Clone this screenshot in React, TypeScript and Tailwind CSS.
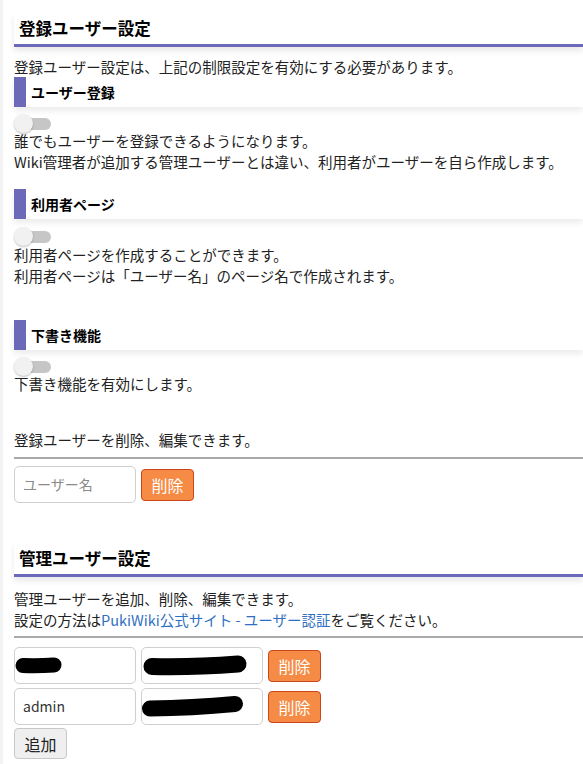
import React from "react";

const font = { fontFamily: '"Noto Sans CJK JP", "Noto Sans", sans-serif' };

const SectionTitle = ({ children }: { children: React.ReactNode }) => (
  <h2 className="h-[34px] flex items-center pl-[5px] border-b-[3px] border-[#6b69b8] bg-white text-[16.5px] font-bold text-black shadow-[0_4px_6px_rgba(0,0,0,0.09)]">
    {children}
  </h2>
);

const SubTitle = ({ children, className = "" }: { children: React.ReactNode; className?: string }) => (
  <h3
    className={`h-[30px] flex items-center pl-[5px] border-l-[12px] border-[#6b69b8] bg-white text-[14px] font-bold text-black shadow-[0_4px_6px_rgba(0,0,0,0.08)] ${className}`}
  >
    {children}
  </h3>
);

const Toggle = ({ className = "" }: { className?: string }) => (
  <div className={`relative w-[37px] h-[20px] ${className}`}>
    <div className="absolute left-[3px] right-0 top-[4px] h-[12px] rounded-full bg-[#c6c6c6]" />
    <div className="absolute left-0 top-0 w-[19px] h-[19px] rounded-full bg-[#f1f1f1] shadow-[0_1px_2px_rgba(0,0,0,0.25)]" />
  </div>
);

const Redact = ({ d, width }: { d: string; width: number }) => (
  <svg className="absolute inset-0 overflow-visible pointer-events-none" width="122" height="37" viewBox="0 0 122 37">
    <path d={d} stroke="#000" strokeWidth={width} strokeLinecap="round" fill="none" />
  </svg>
);

const DeleteButton = () => (
  <button className="w-[53px] h-[32px] rounded-[4px] border border-[#c9471a] bg-[#f68b45] text-white text-[16px]">
    削除
  </button>
);

const Field = ({ children }: { children?: React.ReactNode }) => (
  <div className="relative w-[122px] h-[37px] rounded-[5px] border border-[#cfcfcf] bg-white flex items-center px-[8px] text-[14px] text-[#333]">
    {children}
  </div>
);

export default function App() {
  return (
    <div style={font} className="min-h-[764px] bg-white border-l-[3px] border-[#f3f3f3] pl-[11px] pt-[13px] text-[14.5px] text-[#222] overflow-hidden">
      <SectionTitle>登録ユーザー設定</SectionTitle>
      <p className="mt-[10px] leading-[20px]">登録ユーザー設定は、上記の制限設定を有効にする必要があります。</p>

      <SubTitle>ユーザー登録</SubTitle>
      <Toggle className="mt-[7px]" />
      <div className="-mt-[4px] leading-[21px]">
        <p>誰でもユーザーを登録できるようになります。</p>
        <p>Wiki管理者が追加する管理ユーザーとは違い、利用者がユーザーを自ら作成します。</p>
      </div>

      <SubTitle className="mt-[17px]">利用者ページ</SubTitle>
      <Toggle className="mt-[8px]" />
      <div className="-mt-[3px] leading-[21px]">
        <p>利用者ページを作成することができます。</p>
        <p>利用者ページは「ユーザー名」のページ名で作成されます。</p>
      </div>

      <SubTitle className="mt-[34px]">下書き機能</SubTitle>
      <Toggle className="mt-[7px]" />
      <p className="-mt-[4px] leading-[21px]">下書き機能を有効にします。</p>

      <p className="mt-[35px] leading-[21px]">登録ユーザーを削除、編集できます。</p>
      <div className="mt-[7px] h-[2px] bg-[#a9a9a9]" />
      <div className="mt-[7px] flex items-center gap-[5px]">
        <Field>
          <span className="text-[#8a8a8a]">ユーザー名</span>
        </Field>
        <DeleteButton />
      </div>

      <div className="mt-[40px]">
        <SectionTitle>管理ユーザー設定</SectionTitle>
      </div>
      <div className="mt-[11px] leading-[21px]">
        <p>管理ユーザーを追加、削除、編集できます。</p>
        <p>
          設定の方法は<span className="text-[#2f6fc2]">PukiWiki公式サイト - ユーザー認証</span>をご覧ください。
        </p>
      </div>
      <div className="mt-[6px] h-[2px] bg-[#a9a9a9]" />

      <div className="mt-[9px] flex flex-col gap-[4px]">
        <div className="flex items-center gap-[5px]">
          <Field>
            <Redact d="M8 17.5 Q24 18 39 17" width={15} />
          </Field>
          <Field>
            <Redact d="M10 18.5 Q50 19.5 96 16" width={17} />
          </Field>
          <DeleteButton />
        </div>
        <div className="flex items-center gap-[5px]">
          <Field>admin</Field>
          <Field>
            <Redact d="M8 19.5 Q50 19 93 15" width={16} />
          </Field>
          <DeleteButton />
        </div>
      </div>
      <button className="mt-[3px] w-[53px] h-[31px] rounded-[4px] border border-[#c8c8c8] bg-[#efefef] text-[16px] text-[#222]">
        追加
      </button>
    </div>
  );
}
